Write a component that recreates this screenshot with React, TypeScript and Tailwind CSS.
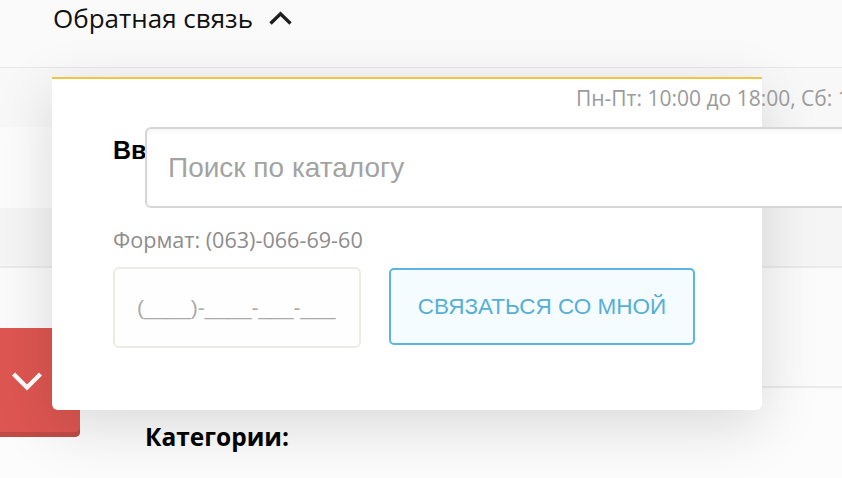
import { useState } from 'react';

function ChevronUp() {
  return (
    <svg width="25" height="15" viewBox="0 0 25 15" fill="none">
      <path d="M2.5 12.5 L12.5 2.8 L22.5 12.5" stroke="#1e1e1e" strokeWidth="3.4" />
    </svg>
  );
}

function ChevronDown() {
  return (
    <svg width="32" height="21" viewBox="0 0 32 21" fill="none">
      <path d="M2.5 3 L16 16.5 L29.5 3" stroke="#ffffff" strokeWidth="4.4" />
    </svg>
  );
}

function CallbackPanel() {
  const [phone, setPhone] = useState('');

  return (
    <div className="absolute left-[52px] top-[77px] z-10 w-[710px] h-[333px] bg-white border-t-2 border-[#f4c443] rounded-b-[6px] shadow-[0_16px_60px_rgba(0,0,0,0.14)] pl-[61px]">
      <p className="mt-[6px] ml-[463px] whitespace-nowrap text-[21px] leading-[26px] text-[#9b9b9b]">
        Пн-Пт: 10:00 до 18:00, Сб: 10:00 до 15:00
      </p>
      <h3 className="mt-[24px] whitespace-nowrap font-['Liberation_Sans',Arial,sans-serif] text-[25px] font-bold leading-[30px] text-black">
        Введите ваш номер телефона
      </h3>
      <p className="mt-[62px] text-[21.6px] leading-[26px] text-[#8d8d8d]">Формат: (063)-066-69-60</p>
      <div className="mt-[14px] flex items-start gap-[28px]">
        <input
          value={phone}
          onChange={(e) => setPhone(e.target.value)}
          placeholder="(____)-____-___-___"
          className="w-[248px] h-[81px] rounded-[6px] border-2 border-[#ecece7] bg-[#fefefe] px-[22px] font-['Liberation_Sans',Arial,sans-serif] text-[21px] text-[#333] outline-none placeholder:text-[#aaaaaa]"
        />
        <button className="mt-[1px] w-[306px] h-[77px] rounded-[5px] border-2 border-[#5bb5de] bg-[#f4fcff] font-['Liberation_Sans',Arial,sans-serif] text-[22.5px] text-[#56afd7]">
          СВЯЗАТЬСЯ СО МНОЙ
        </button>
      </div>
    </div>
  );
}

export default function App() {
  return (
    <div className="relative w-[842px] h-[478px] overflow-hidden bg-[#fcfcfc] font-['Open_Sans',sans-serif]">
      <header className="h-[68px] bg-[#fafafa] border-b border-[#e6e6e6] shadow-[0_1px_3px_rgba(0,0,0,0.04)] flex items-start pl-[53px]">
        <button className="flex items-center gap-[15px] text-[26px] leading-[36px] text-[#111]">
          <span>Обратная связь</span>
          <ChevronUp />
        </button>
      </header>

      <div className="h-[59px] bg-[#f8f8f8]" />

      <div className="relative z-20 h-[81px] pl-[145px]">
        <input
          placeholder="Поиск по каталогу"
          className="w-[760px] h-full rounded-l-[6px] border-2 border-[#d6d6d6] bg-white pl-[21px] font-['Liberation_Sans',Arial,sans-serif] text-[28px] outline-none shadow-[inset_0_3px_4px_rgba(0,0,0,0.04)] placeholder:text-[#a3a3a3]"
        />
      </div>

      <div className="h-[60px] bg-[#f5f5f5] border-b-2 border-[#eaeaea]" />
      <div className="h-[120px] bg-[#fbfbfb] border-b-2 border-[#eaeaea]" />
      <div className="pl-[145px] pt-[34px]">
        <h3 className="text-[24.5px] font-bold leading-[30px] text-black">Категории:</h3>
      </div>

      <button className="absolute left-0 top-[328px] z-[5] w-[80px] h-[109px] rounded-br-[5px] bg-[#de5651] shadow-[inset_0_-5px_0_#c04b47] flex items-center pl-[11px] pb-[2px]">
        <ChevronDown />
      </button>

      <CallbackPanel />
    </div>
  );
}
